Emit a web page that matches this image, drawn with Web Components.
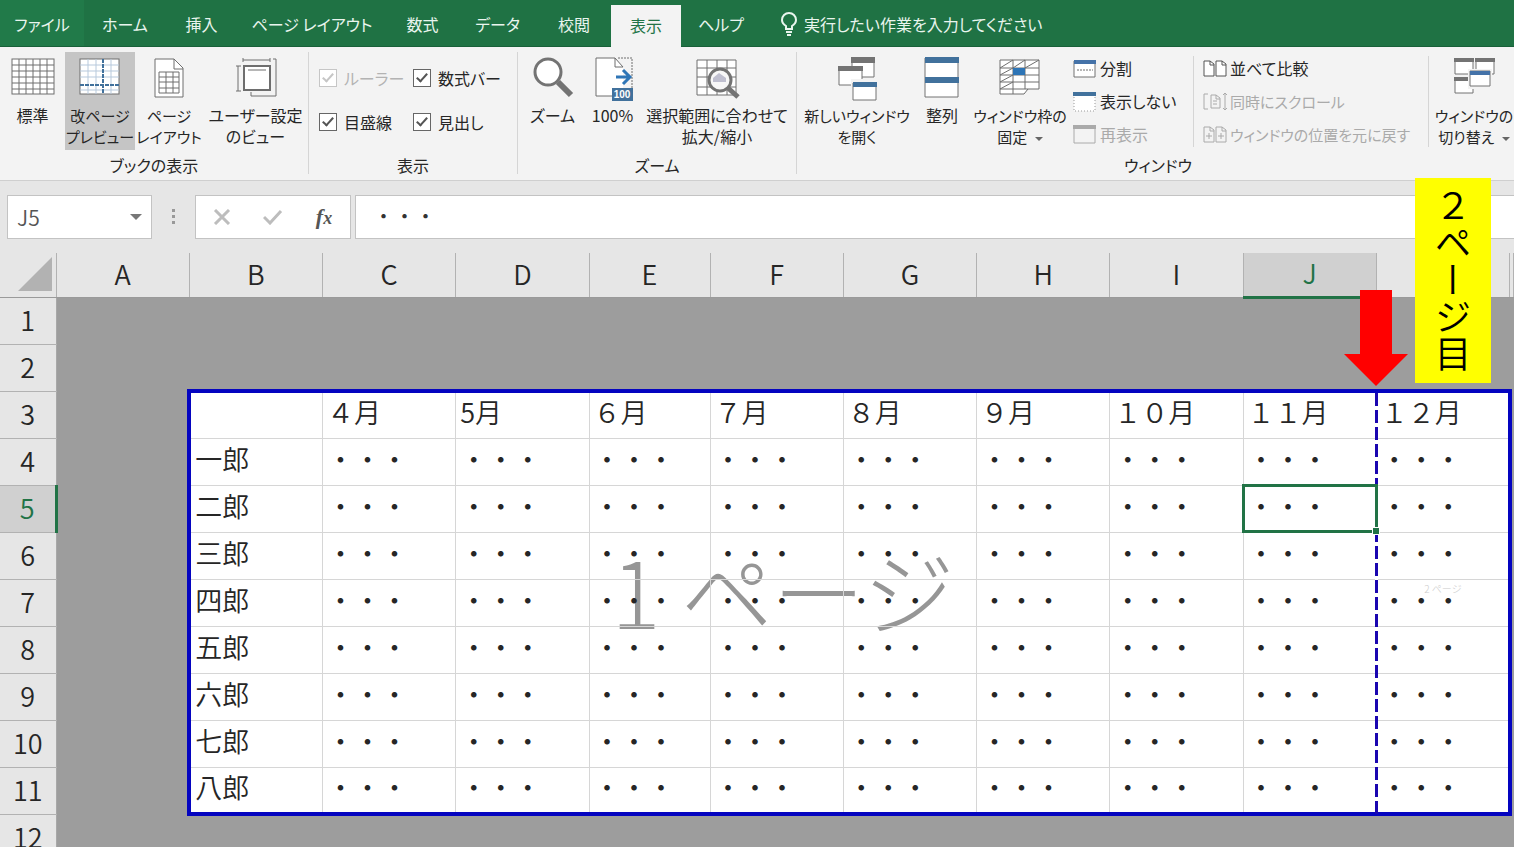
<!DOCTYPE html>
<html lang="ja">
<head>
<meta charset="utf-8">
<title>Excel - 改ページプレビュー</title>
<style>
  html, body { margin: 0; height: 100%; }
  body { overflow: hidden; font-family: "Noto Sans CJK JP", "Noto Sans", sans-serif; color: #262626; }
  .g { fill: none; stroke: #6e6e6e; }
</style>
</head>
<body>
<excel-window>
  <ribbon-tabs slot="tabs"></ribbon-tabs>

  <ribbon-bar slot="ribbon">
    <ribbon-group label="ブックの表示" style="--cols: 65px 70px 68px 105px">
      <ribbon-button>
        <svg slot="icon" width="44" height="44" viewBox="0 0 44 44"><rect x="1" y="2" width="42" height="35" fill="#fff" stroke="#6e6e6e"/><path class="g" stroke-width="1" d="M8 2v35M15 2v35M22 2v35M29 2v35M36 2v35M1 8h42M1 14h42M1 20h42M1 26h42M1 32h42"/></svg>
        標準
      </ribbon-button>
      <ribbon-button pressed dense>
        <svg slot="icon" width="44" height="44" viewBox="0 0 44 44"><rect x="2" y="2" width="39" height="35" fill="#fff" stroke="#6e6e6e"/><path fill="none" stroke="#b7c9dc" d="M10 2v35M18 2v35M33 2v35M2 8h39M2 14h39M2 20h39M2 33h39"/><path fill="none" stroke="#41719c" stroke-width="2" stroke-dasharray="4 1" d="M25 2v35M2 28h39"/></svg>
        改ページ<br>プレビュー
      </ribbon-button>
      <ribbon-button dense>
        <svg slot="icon" width="44" height="44" viewBox="0 0 44 44"><path d="M8 2h19l9 9v29H8z" fill="#fff" stroke="#6e6e6e"/><path class="g" d="M27 2v10h9M12 15h20v21H12zM19 15v21M26 15v21M12 20h20M12 25h20M12 31h20"/></svg>
        ページ<br>レイアウト
      </ribbon-button>
      <ribbon-button>
        <svg slot="icon" width="44" height="44" viewBox="0 0 44 44"><path class="g" d="M9 3h27M9 1v4M36 1v4M2 9h5M2 34h5M4 9v25M39 2h3v37H17v-4"/><rect x="10" y="9" width="26" height="24" fill="#fff" stroke="#6e6e6e" stroke-width="2"/><path class="g" d="M14 13h18"/></svg>
        ユーザー設定<br>のビュー
      </ribbon-button>
    </ribbon-group>

    <ribbon-group label="表示" style="--cols: 94px 1fr; --pad: 10px">
      <check-stack><check-box disabled>ルーラー</check-box><check-box>目盛線</check-box></check-stack>
      <check-stack><check-box>数式バー</check-box><check-box>見出し</check-box></check-stack>
    </ribbon-group>

    <ribbon-group label="ズーム" style="--cols: 69px 51px 158px">
      <ribbon-button>
        <svg slot="icon" width="44" height="44" viewBox="0 0 44 44"><circle cx="17" cy="15" r="13" fill="#fff" stroke="#737373" stroke-width="3"/><path d="M27 25l13 13" stroke="#737373" stroke-width="6"/></svg>
        ズーム
      </ribbon-button>
      <ribbon-button>
        <svg slot="icon" width="44" height="46" viewBox="0 0 44 46"><path d="M5 1h18l9 9v29H5z" fill="#fff"/><path class="g" d="M21 39H5V1h19v9h8"/><path class="g" d="M24 1l8 9"/><path class="g" stroke-dasharray="2 1" d="M27 1h14v30"/><path d="M25 20h14M32 13l7 7-7 7" fill="none" stroke="#2e75b6" stroke-width="3"/><rect x="21" y="31" width="21" height="13" fill="#41719c"/><text x="31" y="41" text-anchor="middle" font-family="Liberation Sans" font-weight="700" font-size="10" fill="#fff">100</text></svg>
        100%
      </ribbon-button>
      <ribbon-button>
        <svg slot="icon" width="46" height="46" viewBox="0 0 46 46"><path d="M3 3h39v35H3z" fill="#fff" stroke="#6e6e6e"/><path class="g" stroke="#999" d="M13 3v35M23 3v35M33 3v35M3 11h39M3 20h39M3 30h39"/><circle cx="26" cy="23" r="11" fill="#f7f7f7" stroke="#737373" stroke-width="3"/><path d="M19 25v-4l6-5 7 5v4z" fill="#bfbfcf"/><path d="M34 31l10 9" stroke="#737373" stroke-width="5"/></svg>
        選択範囲に合わせて<br>拡大/縮小
      </ribbon-button>
    </ribbon-group>

    <ribbon-group wide label="ウィンドウ" style="--cols: 120px 50px 106px 120px 236px 90px">
      <ribbon-button dense>
        <svg slot="icon" width="44" height="46" viewBox="0 0 44 46"><path d="M17 1h22v19H17z" fill="#fff" stroke="#737373"/><path d="M16 0h24v6H16z" fill="#737373"/><path d="M4 10h23v18H4z" fill="#fff" stroke="#737373"/><path d="M3 9h25v5H3z" fill="#737373"/><path d="M16 22h27v22H16z" fill="#f3f3f3"/><path d="M18 26h23v17H18z" fill="#fff" stroke="#737373"/><path d="M18 25h24v5H18z" fill="#41719c"/></svg>
        新しいウィンドウ<br>を開く
      </ribbon-button>
      <ribbon-button>
        <svg slot="icon" width="36" height="44" viewBox="0 0 36 44"><path d="M1 1h33v39H1z" fill="#fff" stroke="#737373"/><path d="M1 0h34v6H1zM1 20h34v6H1z" fill="#41719c"/></svg>
        整列
      </ribbon-button>
      <ribbon-button menu dense>
        <svg slot="icon" width="44" height="44" viewBox="0 0 44 44"><path d="M2 3h39v29h-11l-4 5H2z" fill="#fff" stroke="#6e6e6e"/><path class="g" stroke="#999" d="M15 3v34M27 3v29M2 11h39M2 18h39M2 25h39M2 32h28M2 11l13-8M2 18l13-7M2 25l13-7M2 32l13-7M15 11l12-8M27 11l14-8"/><path d="M15 11h12v7H15z" fill="#2e75b6"/></svg>
        ウィンドウ枠の<br>固定
      </ribbon-button>
      <small-stack>
        <small-button><svg slot="icon" width="24" height="20" viewBox="0 0 24 20"><path d="M1 2h21v16H1z" fill="#fff" stroke="#737373"/><path d="M1 1h22v4H1z" fill="#4472a8"/><path class="g" stroke-dasharray="2 1" d="M4 11h16"/></svg>分割</small-button>
        <small-button><svg slot="icon" width="24" height="20" viewBox="0 0 24 20"><path d="M1 2h21v17H1z" fill="#fff" stroke="#999" stroke-dasharray="1 2"/><path d="M0 0h23v4H0z" fill="#41719c"/></svg>表示しない</small-button>
        <small-button disabled><svg slot="icon" width="24" height="20" viewBox="0 0 24 20"><path d="M1 1h21v17H1z" fill="#f3f3f3" stroke="#aaa"/><path d="M0 0h23v4H0z" fill="#aaa"/></svg>再表示</small-button>
      </small-stack>
      <small-stack lined>
        <small-button><svg slot="icon" width="24" height="20" viewBox="0 0 24 20"><path d="M1 2h6l4 3v12H1zM13 2h6l4 3v12H13z" fill="#fff" stroke="#555"/><path d="M7 2v4h4M19 2v4h4" fill="none" stroke="#555"/></svg>並べて比較</small-button>
        <small-button disabled dense><svg slot="icon" width="24" height="20" viewBox="0 0 24 20"><path d="M5 2H1v15h4M8 3h5l4 3v10H8zM13 3v4h4M22 1v17M20 3l2-2 2 2M20 16l2 2 2-2M10 9h4M10 12h4" fill="none" stroke="#aaa"/></svg>同時にスクロール</small-button>
        <small-button disabled dense><svg slot="icon" width="24" height="20" viewBox="0 0 24 20"><path d="M1 2h6l4 3v12H1zM13 2h6l4 3v12H13zM7 2v4h4M19 2v4h4M3 11h6M6 8v6M15 11h6M18 8v6" fill="none" stroke="#aaa"/></svg>ウィンドウの位置を元に戻す</small-button>
      </small-stack>
      <ribbon-button menu dense>
        <svg slot="icon" width="44" height="44" viewBox="0 0 44 44"><path d="M3 2h18v15H3zM24 2h18v15H24zM3 21h18v15H3z" fill="#fff" stroke="#737373"/><path d="M2 1h20v4H2zM23 1h20v4H23zM2 20h20v4H2z" fill="#737373"/><path d="M16 12h24v20H16z" fill="#f3f3f3"/><path d="M18 14h20v15H18z" fill="#fff" stroke="#737373"/><path d="M18 14h20v4H18z" fill="#4472a8"/></svg>
        ウィンドウの<br>切り替え
      </ribbon-button>
    </ribbon-group>
  </ribbon-bar>

  <formula-bar slot="formula"></formula-bar>
  <sheet-grid slot="sheet"></sheet-grid>
  <page-callout slot="callout">２ページ目</page-callout>
</excel-window>

<script>
  function define(name, html, setup) {
    const tpl = document.createElement('template');
    tpl.innerHTML = html;
    customElements.define(name, class extends HTMLElement {
      constructor() {
        super();
        this.attachShadow({ mode: 'open' }).append(tpl.content.cloneNode(true));
      }
      connectedCallback() { if (setup) setup(this, this.shadowRoot); }
    });
  }

  define('excel-window', `
    <style>
      :host { display: flex; flex-direction: column; height: 100vh; position: relative; overflow: hidden; background: #e6e6e6; }
      ::slotted([slot=sheet]) { flex: 1; min-height: 0; }
    </style>
    <slot name="tabs"></slot><slot name="ribbon"></slot><slot name="formula"></slot><slot name="sheet"></slot><slot name="callout"></slot>`);

  define('ribbon-tabs', `
    <style>
      :host { display: block; background: #1f7244; border-bottom: 1px solid #186039; }
      nav { display: grid; grid-template-columns: 84px 82px 71px 150px 71px 79px 74px 70px 80px 1fr; height: 46px; }
      button { border: 0; background: none; color: #e9f5ee; font: 16px/24px "Noto Sans CJK JP", sans-serif; font-feature-settings: "palt"; padding: 2px 0 0; white-space: nowrap; }
      .file { background: #217a49; }
      .on { background: #f3f3f3; color: #217346; margin: 5px 0 -1px; padding: 0 0 3px; }
      .tell { display: flex; align-items: center; gap: 6px; padding-left: 19px; text-align: left; }
    </style>
    <nav>
      <button class="file">ファイル</button><button>ホーム</button><button>挿入</button><button>ページ レイアウト</button><button>数式</button><button>データ</button><button>校閲</button><button class="on">表示</button><button>ヘルプ</button>
      <button class="tell"><svg width="18" height="24" viewBox="0 0 18 24" fill="none" stroke="#e9f5ee" stroke-width="2"><path d="M6 17v-3C3 12 2 10 2 8a7 7 0 0 1 14 0c0 2-1 4-4 6v3zM6 20h6M7 23h4"/></svg>実行したい作業を入力してください</button>
    </nav>`);

  define('ribbon-bar', `
    <style>:host { display: flex; height: 133px; background: #f3f3f3; border-bottom: 1px solid #cfcfcf; overflow: hidden; }</style>
    <slot></slot>`);

  define('ribbon-group', `
    <style>
      :host { display: flex; flex-direction: column; box-sizing: border-box; border-right: 1px solid #d5d5d5; margin: 5px 0 6px; flex: none; }
      :host([label="表示"]) { width: 209px; }
      :host([wide]) { border-right: 0; }
      .row { display: grid; grid-template-columns: var(--cols); height: 98px; flex: none; padding-left: var(--pad, 0); }
      .label { text-align: center; font-size: 16px; line-height: 24px; padding-top: 3px; font-feature-settings: "palt"; }
    </style>
    <div class="row"><slot></slot></div><div class="label"></div>`,
    (el, root) => { root.querySelector('.label').textContent = el.getAttribute('label'); });

  define('ribbon-button', `
    <style>
      :host { display: block; }
      button { display: flex; flex-direction: column; align-items: center; width: 100%; height: 98px; padding: 5px 0 0; border: 0; background: none; color: #262626; font: 16px/21px "Noto Sans CJK JP", sans-serif; font-feature-settings: "palt"; white-space: nowrap; }
      :host([dense]) button { font-size: 15px; }
      .icon { height: 48px; display: block; flex: none; }
      .text { display: block; }
      :host([pressed]) button { background: #c5c5c5; }
      .arrow { display: none; }
      :host([menu]) .arrow { display: inline-block; border: 4px solid transparent; border-top-color: #666; border-bottom: 0; margin-left: 4px; vertical-align: middle; }
    </style>
    <button><span class="icon"><slot name="icon"></slot></span><span class="text"><slot></slot><i class="arrow"></i></span></button>`);

  define('check-stack', `
    <style>:host { display: flex; flex-direction: column; gap: 20px; padding-top: 14px; }</style><slot></slot>`);

  define('check-box', `
    <style>
      :host { display: block; }
      label { display: flex; align-items: center; gap: 7px; font-size: 16px; line-height: 24px; font-feature-settings: "palt"; white-space: nowrap; }
      input { appearance: none; box-sizing: border-box; flex: none; width: 18px; height: 18px; margin: 0; border: 1px solid #666; background: #fff; display: grid; place-items: center; }
      input:checked::before { content: ""; width: 4px; height: 9px; border: solid #555; border-width: 0 2px 2px 0; transform: rotate(42deg); margin-bottom: 3px; }
      :host([disabled]) label { color: #b3b3b3; }
      :host([disabled]) input, :host([disabled]) input::before { border-color: #c6c6c6; }
    </style>
    <label><input type="checkbox" checked><span><slot></slot></span></label>`,
    (el, root) => { root.querySelector('input').disabled = el.hasAttribute('disabled'); });

  define('small-stack', `
    <style>
      :host { display: flex; flex-direction: column; gap: 8px; padding-top: 4px; }
      :host([lined]) { margin: 4px 0 6px; padding: 0 0 0 9px; border: solid #d5d5d5; border-width: 0 1px; }
    </style><slot></slot>`);

  define('small-button', `
    <style>
      :host { display: block; }
      button { display: flex; align-items: center; gap: 3px; border: 0; padding: 0; background: none; color: #262626; font: 16px/25px "Noto Sans CJK JP", sans-serif; font-feature-settings: "palt"; white-space: nowrap; }
      :host([dense]) button { font-size: 15px; }
      button:disabled { color: #aaa; }
      .icon { display: flex; }
    </style>
    <button><span class="icon"><slot name="icon"></slot></span><span><slot></slot></span></button>`,
    (el, root) => { root.querySelector('button').disabled = el.hasAttribute('disabled'); });

  define('formula-bar', `
    <style>
      :host { display: flex; height: 44px; padding: 14px 0 14px 7px; background: #e6e6e6; }
      .box { box-sizing: border-box; background: #fff; border: 1px solid #c3c3c3; display: flex; align-items: center; }
      .name { width: 145px; padding: 0 9px; }
      input { border: 0; padding: 0; background: none; outline: 0; min-width: 0; flex: 1; color: #555; font: 350 21px/30px "Noto Sans CJK JP", sans-serif; }
      .tri { border: 6px solid transparent; border-top-color: #777; border-bottom: 0; }
      .grip { width: 43px; display: grid; place-items: center; }
      .tools { width: 156px; padding: 0 13px; justify-content: space-between; margin-right: 4px; }
      button { border: 0; padding: 0; background: none; display: grid; place-items: center; width: 26px; height: 30px; color: #555; }
      .fx { font: italic 700 22px/26px "Liberation Serif", serif; display: block; }
      .fx small { font-size: 18px; }
      .value { flex: 1; border-right: 0; padding: 0 0 4px 17px; }
      .value input { color: #333; }
    </style>
    <div class="box name"><input aria-label="名前ボックス" value="J5"><i class="tri"></i></div>
    <div class="grip"><svg width="4" height="16" fill="#999"><path d="M0 0h3v3H0zM0 6h3v3H0zM0 12h3v3H0z"/></svg></div>
    <div class="box tools">
      <button aria-label="キャンセル"><svg width="18" height="16" viewBox="0 0 18 16" fill="none" stroke="#bdbdbd" stroke-width="3"><path d="M2 1l14 14M16 1L2 15"/></svg></button>
      <button aria-label="入力"><svg width="20" height="16" viewBox="0 0 20 16" fill="none" stroke="#bdbdbd" stroke-width="3"><path d="M1 8l6 6L18 2"/></svg></button>
      <button class="fx" aria-label="関数の挿入">f<small>x</small></button>
    </div>
    <div class="box value"><input aria-label="数式バー" value="・・・"></div>`);

  define('sheet-grid', `
    <style>
      :host { display: block; position: relative; z-index: 0; overflow: hidden; background: #fff; --blue: 4px solid #0404c0; font-weight: 350; }
      table { width: 100%; table-layout: fixed; border-collapse: collapse; font-size: 27px; line-height: 38px; }
      .rows { width: 56px; } .e { width: 121px; } .edge { width: 4px; }
      th, td { box-sizing: border-box; height: 47px; padding: 0 0 6px; font-weight: 350; white-space: nowrap; }
      thead th { height: 44px; padding: 0 0 2px; background: #e6e6e6; border-right: 1px solid #b2b2b2; border-bottom: 1px solid #9a9a9a; position: relative; }
      tbody th { background: #e6e6e6; border-bottom: 1px solid #b2b2b2; border-right: 1px solid #a8a8a8; padding: 0 0 2px; }
      thead th.sel, tbody th.sel { background: #d0d0d0; color: #217346; }
      thead th.sel { border-bottom: 3px solid #217346; }
      tbody th.sel { border-right: 3px solid #217346; }
      td { text-align: left; background: #9d9d9d; }
      td.in { background: none; border: 1px solid #d6d6d6; padding-left: 4px; position: relative; }
      td.top { border-top: var(--blue); } td.left { border-left: var(--blue); }
      td.bottom { border-bottom: var(--blue); } td.right { border-right: var(--blue); }
      .corner svg { display: block; margin-left: auto; margin-right: 4px; }
      .break { position: absolute; z-index: 1; right: -2px; top: 0; width: 3px; height: 421px; background: repeating-linear-gradient(#1a06b0 0 13px, #fff 13px 17px); }
      .cursor { position: absolute; z-index: 2; inset: -2px -2px -1px -2px; border: 3px solid #217346; }
      .cursor::after { content: ""; position: absolute; right: -5px; bottom: -5px; width: 6px; height: 6px; background: #217346; border: 1px solid #fff; }
      .arrow { position: absolute; z-index: 3; right: -32px; top: 37px; }
      .mark { position: absolute; z-index: -1; top: 138px; height: 394px; display: flex; align-items: center; justify-content: center; white-space: pre; color: #969696; font-weight: 300; }
      .p1 { left: 190px; right: 138px; font-size: 92px; }
      .p2 { right: 4px; width: 134px; font-size: 10px; color: #ccc; }
    </style>
    <div class="mark p1">1 ページ</div><div class="mark p2">2 ページ</div>
    <table><colgroup><col class="rows"><col><col><col><col><col class="e"><col><col><col><col><col><col><col class="edge"></colgroup><thead></thead><tbody></tbody></table>`,
    (el, root) => {
      const cols = [...'ABCDEFGHIJK'];
      const months = ['', '４月', '5月', '６月', '７月', '８月', '９月', '１０月', '１１月', '１２月'];
      const names = ['一郎', '二郎', '三郎', '四郎', '五郎', '六郎', '七郎', '八郎'];
      const arrow = '<svg class="arrow" width="64" height="96" viewBox="0 0 64 96"><path d="M16 0h32v64h16L32 96 0 64h16z" fill="#f00"/></svg>';
      root.querySelector('thead').innerHTML = '<tr><th class="corner"><svg width="34" height="34"><path d="M0 34L34 0v34z" fill="#b2b2b2"/></svg></th>' +
        cols.map(c => c === 'J' ? `<th class="sel">J${arrow}</th>` : `<th>${c === 'K' ? '' : c}</th>`).join('') + '<th></th></tr>';
      let html = '';
      for (let r = 1; r <= 12; r++) {
        html += `<tr><th${r === 5 ? ' class="sel"' : ''}>${r}</th>`;
        cols.forEach((c, i) => {
          if (r < 3 || r > 11 || i === 0) { html += '<td></td>'; return; }
          const cls = ['in', r === 3 && 'top', r === 11 && 'bottom', i === 1 && 'left', i === 10 && 'right'].filter(Boolean).join(' ');
          const text = r === 3 ? months[i - 1] : i === 1 ? names[r - 4] : '・・・';
          const extra = c === 'J' && r === 3 ? '<i class="break"></i>' : c === 'J' && r === 5 ? '<i class="cursor"></i>' : '';
          html += `<td class="${cls}">${text}${extra}</td>`;
        });
        html += '<td></td></tr>';
      }
      root.querySelector('tbody').innerHTML = html;
    });

  define('page-callout', `
    <style>
      :host { display: flex; align-items: center; position: absolute; top: 178px; right: 23px; width: 76px; height: 205px; box-sizing: border-box; padding-top: 9px; background: #ff0; color: #000; writing-mode: vertical-rl; font-size: 37px; line-height: 76px; font-weight: 350; }
    </style>
    <span><slot></slot></span>`);
</script>
</body>
</html>
